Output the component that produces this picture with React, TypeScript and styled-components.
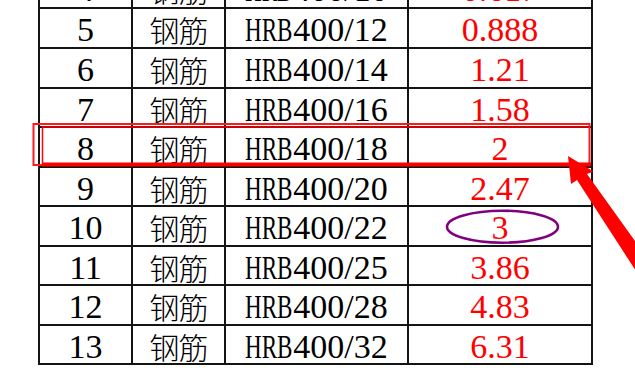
import React from "react";
import styled, { createGlobalStyle } from "styled-components";

const GlobalStyle = createGlobalStyle`
  html, body { margin: 0; padding: 0; background: #ffffff; }
  #root { width: 635px; height: 392px; }
`;

const Viewport = styled.div`
  position: relative;
  width: 635px;
  height: 392px;
  overflow: hidden;
  background: #ffffff;
`;

const Table = styled.div`
  display: grid;
  grid-template-columns: 91px 91px 181px 182px;
  grid-template-rows: 38px 38px 38px 37px 38px 37px 38px 37px 38px 37px;
  gap: 2px;
  padding: 2px;
  width: max-content;
  background: #141414;
  margin: -33px 0 0 38px;
`;

const Cell = styled.div<{ $tone?: "red" | "black" }>`
  display: flex;
  align-items: center;
  justify-content: center;
  padding-top: 4px;
  box-sizing: border-box;
  background: #ffffff;
  color: ${(p) => (p.$tone === "red" ? "#ff0000" : "#000000")};
  font-family: "Liberation Serif", "Times New Roman", serif;
  font-size: 34px;
  line-height: 1;
  white-space: nowrap;
`;

const MaterialCell = styled(Cell)`
  padding-top: 2px;
  font-family: "Noto Sans CJK SC", "Noto Sans CJK JP", sans-serif;
  font-size: 30px;
  font-weight: 300;
  letter-spacing: -1px;
`;

const Squeeze = styled.span`
  display: inline-block;
  transform: scaleX(0.68);
  transform-origin: left center;
  margin-right: -22px;
`;

const Overlay = styled.svg`
  position: absolute;
  left: 0;
  top: 0;
  width: 635px;
  height: 392px;
  pointer-events: none;
`;

type Row = { no: number; size: number; weight: string };

const rows: Row[] = [
  { no: 4, size: 10, weight: "0.617" },
  { no: 5, size: 12, weight: "0.888" },
  { no: 6, size: 14, weight: "1.21" },
  { no: 7, size: 16, weight: "1.58" },
  { no: 8, size: 18, weight: "2" },
  { no: 9, size: 20, weight: "2.47" },
  { no: 10, size: 22, weight: "3" },
  { no: 11, size: 25, weight: "3.86" },
  { no: 12, size: 28, weight: "4.83" },
  { no: 13, size: 32, weight: "6.31" },
];

export default function App() {
  return (
    <>
      <GlobalStyle />
      <Viewport>
        <Table>
          {rows.map((r) => (
            <React.Fragment key={r.no}>
              <Cell>{r.no}</Cell>
              <MaterialCell>钢筋</MaterialCell>
              <Cell>
                <Squeeze>HRB</Squeeze>400/{r.size}
              </Cell>
              <Cell $tone="red">{r.weight}</Cell>
            </React.Fragment>
          ))}
        </Table>
        <Overlay viewBox="0 0 635 392">
          <rect x="33.5" y="124" width="556" height="41" fill="none" stroke="#ff1a1a" strokeWidth="2" />
          <polyline points="42.5,166 42.5,127 589,127" fill="none" stroke="#ff0000" strokeWidth="1.5" />
          <line x1="42" y1="164.5" x2="591" y2="164.5" stroke="#ff0000" strokeWidth="4" />
          <polygon
            points="568,156 593.5,171.5 587,174 645,255 645,285 577,180 571,184"
            fill="#ff0000"
          />
          <ellipse cx="502.5" cy="226.7" rx="55.5" ry="16" fill="none" stroke="#800080" strokeWidth="2.6" />
        </Overlay>
      </Viewport>
    </>
  );
}
